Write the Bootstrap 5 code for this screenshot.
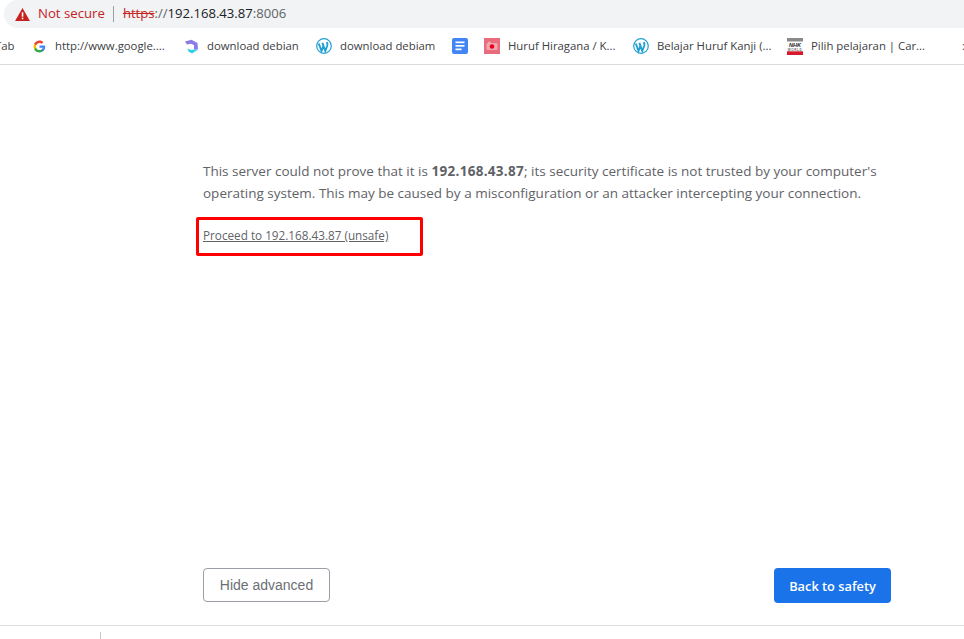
<!doctype html>
<html><head><meta charset="utf-8">
<link href="https://cdn.jsdelivr.net/npm/bootstrap@5.3.0/dist/css/bootstrap.min.css" rel="stylesheet">
<style>
html,body{height:639px;overflow:hidden;background:#fff}
body{font-family:"Open Sans","Noto Sans",sans-serif;color:#5f6368}
.shot{height:639px;width:964px;overflow:hidden}
.omni{height:28px;background:#f1f3f4;margin-left:4px;border-radius:14px 0 0 14px;font-size:13.1px;padding-left:11px}
.nots{color:#c5221f;margin-left:8px;font-size:13.2px}
.sep{width:1px;height:16px;background:#9aa0a6;margin:0 9px 0 8px}
.hts{color:#c5221f;text-decoration:line-through}
.hostn{color:#202124}
.bmarks{height:37px;padding-top:9px;border-bottom:1px solid #dadce0;font-size:11.35px;color:#3c4043}
.bm{display:flex;align-items:center;height:18px;white-space:nowrap;flex:none}
.bm svg{display:block;flex:none;margin-right:8px}
.bm-tab{width:33px;margin-left:-5px;margin-right:5px}
.bm-g{width:151px}.bm-g svg{margin-right:9px}
.bm-h{width:132px}
.bm-w1{width:136px}
.bm-d{width:32px}
.bm-r{width:149px}
.bm-w2{width:154px}
.bm-n{width:175px}
.msg{margin-left:203px;width:690px;font-size:13.5px;line-height:22px;padding-top:95px;height:503px}
.msg p{margin:0 0 20px;white-space:nowrap}
.msg b{font-weight:700;letter-spacing:.3px}
.lnk{color:#5f6368;font-size:11.72px;text-decoration:underline;display:inline-block;line-height:16px}
.redbox{position:absolute;left:196px;top:217px;width:227px;height:39px;border:3px solid #fe0000;border-radius:2px;pointer-events:none}
.acts{margin:0 73px 0 203px;height:33px}
.btn.btn-hide{height:34px;width:127px;border:1px solid #9aa0a6;border-radius:4px;background:#fff;color:#6b6f74;font:14px "Liberation Sans",sans-serif;padding:0}
.btn.btn-back{height:35px;width:117px;background:#1a73e8;border:0;border-radius:4px;color:#fff;font-size:12.8px;font-weight:600;padding:2px 0 0}
.foot{margin-top:24px;border-top:1px solid #dadce0;height:14px;padding-top:6px}
.tick{width:1px;height:7px;background:#c8c8c8;margin-left:100px}
</style></head><body>
<div class="shot position-relative">
<div class="omni d-flex align-items-center">
<svg width="15" height="13" viewBox="0 0 16 14"><path d="M8 0 16 14H0Z" fill="#c5221f"/><rect x="7.2" y="4.6" width="1.7" height="4.8" fill="#fff"/><rect x="7.2" y="10.4" width="1.7" height="1.7" fill="#fff"/></svg>
<span class="nots">Not secure</span><span class="sep"></span>
<span><span class="hts">https</span>://<span class="hostn">192.168.43.87</span>:8006</span>
</div>
<div class="bmarks d-flex">
<span class="bm bm-tab">Tab</span>
<span class="bm bm-g"><svg width="13" height="13" viewBox="0 0 48 48"><path fill="#4285F4" d="M45 24.500c0-1.600-.1-3.100-.4-4.500H24v8.500h11.800a10 10 0 0 1-4.400 6.600v5.500h7.100C42.700 36.700 45 31.100 45 24.500z"/><path fill="#34A853" d="M24 46c5.900 0 10.900-2 14.500-5.300l-7.100-5.500c-2 1.300-4.500 2.100-7.400 2.100-5.700 0-10.500-3.800-12.200-9H4.500v5.700A22 22 0 0 0 24 46z"/><path fill="#FBBC05" d="M11.800 28.300a13 13 0 0 1 0-8.500v-5.700H4.500a22 22 0 0 0 0 19.900z"/><path fill="#EA4335" d="M24 10.700c3.200 0 6.100 1.100 8.400 3.300l6.300-6.300C34.900 4.200 29.900 2 24 2 15.400 2 8 6.900 4.500 14.100l7.300 5.700c1.700-5.200 6.500-9.100 12.200-9.100z"/></svg>http://www.google....</span>
<span class="bm bm-h"><svg width="15" height="15" viewBox="0 0 15 15"><path d="M1 2.500 7.500 .8 13.500 4 14 10.500 10 10.500 10 6 7 4.800 3 5.500Z" fill="#8b7be8"/><path d="M3.500 9.500 7 11 10 10.500 14 10.500 8 14.500 4.500 12.500Z" fill="#2fd0e6"/></svg>download debian</span>
<span class="bm bm-w1"><svg width="16" height="16" viewBox="0 0 16 16"><circle cx="8" cy="8" r="7.300" fill="none" stroke="#21a0d2" stroke-width="1.200"/><path d="M2.800 5.500 5.500 13 7.500 7.500 6.300 4.800M6.300 4.800 9.300 13 11.300 7.500C11.800 5.800 11.200 5 10.800 4.200" fill="none" stroke="#21a0d2" stroke-width="1.900"/></svg>download debiam</span>
<span class="bm bm-d"><svg width="16" height="16" viewBox="0 0 16 16"><rect width="16" height="16" rx="2" fill="#4285f4"/><rect x="3.500" y="3.500" width="9" height="1.700" fill="#fff"/><rect x="3.500" y="7" width="9" height="1.700" fill="#fff"/><rect x="3.500" y="10.500" width="6" height="1.700" fill="#fff"/></svg></span>
<span class="bm bm-r"><svg width="16" height="16" viewBox="0 0 16 16"><rect width="16" height="16" fill="#e86c7e"/><rect x="2.500" y="5" width="11" height="7" rx="1" fill="#f2a6b0"/><rect x="4" y="3.800" width="3" height="1.500" fill="#f2a6b0"/><circle cx="8" cy="8.500" r="2.300" fill="#e50019"/></svg>Huruf Hiragana / K...</span>
<span class="bm bm-w2"><svg width="16" height="16" viewBox="0 0 16 16"><circle cx="8" cy="8" r="7.300" fill="none" stroke="#21a0d2" stroke-width="1.200"/><path d="M2.800 5.500 5.500 13 7.500 7.500 6.300 4.800M6.300 4.800 9.300 13 11.300 7.500C11.800 5.800 11.200 5 10.800 4.200" fill="none" stroke="#21a0d2" stroke-width="1.900"/></svg>Belajar Huruf Kanji (...</span>
<span class="bm bm-n"><svg width="16" height="17" viewBox="0 0 16 17"><rect width="16" height="3.500" fill="#8a8a8a"/><text x="8" y="9.200" text-anchor="middle" font-family="Liberation Sans" font-size="5.600" font-weight="700" font-style="italic" fill="#222">NHK</text><text x="8" y="12.500" text-anchor="middle" font-family="Liberation Sans" font-size="3" font-weight="700" fill="#666" letter-spacing=".6">WORLD</text><rect y="13.300" width="16" height="3.700" fill="#d6192b"/></svg>Pilih pelajaran | Car...</span>
<span class="bm">:</span>
</div>
<div class="msg">
<p>This server could not prove that it is <b>192.168.43.87</b>; its security certificate is not trusted by your computer's<br>operating system. This may be caused by a misconfiguration or an attacker intercepting your connection.</p>
<a class="lnk" href="#">Proceed to 192.168.43.87 (unsafe)</a>
</div>
<div class="redbox"></div>
<div class="acts d-flex justify-content-between align-items-start">
<button class="btn btn-hide">Hide advanced</button>
<button class="btn btn-back">Back to safety</button>
</div>
<div class="foot"><div class="tick"></div></div>
</div>
</body></html>
